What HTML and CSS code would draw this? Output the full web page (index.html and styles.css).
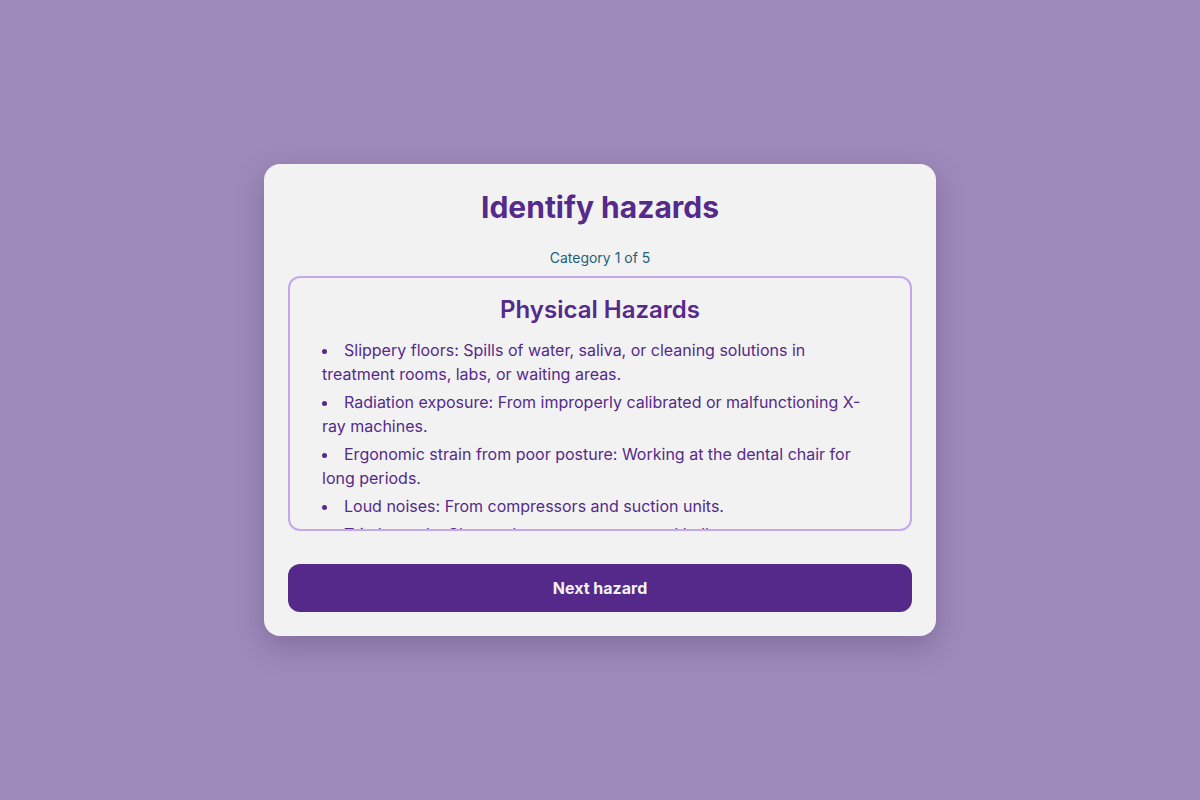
FILE: index.html
```html
<!DOCTYPE html>
<html lang="en">
<head>
<meta charset="utf-8">
<title>Identify hazards</title>
<link rel="stylesheet" href="styles.css">
</head>
<body>
<main class="card">
  <h1 class="title">Identify hazards</h1>
  <p class="progress">Category 1 of 5</p>
  <section class="hazard-box">
    <h2 class="hazard-title">Physical Hazards</h2>
    <ul class="hazard-list">
      <li>Slippery floors: Spills of water, saliva, or cleaning solutions in treatment rooms, labs, or waiting areas.</li>
      <li>Radiation exposure: From improperly calibrated or malfunctioning X-ray machines.</li>
      <li>Ergonomic strain from poor posture: Working at the dental chair for long periods.</li>
      <li>Loud noises: From compressors and suction units.</li>
      <li>Trip hazards: Cluttered treatment rooms and hallways.</li>
    </ul>
  </section>
  <button class="next-btn" type="button">Next hazard</button>
</main>
</body>
</html>
```

FILE: styles.css
```css
* { box-sizing: border-box; }

html, body {
  margin: 0;
  height: 100%;
}

body {
  background: #9e8bbb;
  font-family: Inter, "Noto Sans", sans-serif;
  display: flex;
  align-items: center;
  justify-content: center;
}

.card {
  width: 672px;
  background: #f2f2f2;
  border-radius: 16px;
  padding: 24px;
  box-shadow: 0 10px 30px rgba(40, 20, 70, 0.25);
  display: flex;
  flex-direction: column;
}

.title {
  margin: 0;
  font-weight: 700;
  font-size: 30px;
  line-height: 38px;
  color: #552a8a;
  text-align: center;
}

.progress {
  margin: 22px 0 8px;
  font-size: 14px;
  line-height: 20px;
  color: #1f5f74;
  text-align: center;
}

.hazard-box {
  height: 255px;
  overflow: hidden;
  border: 2px solid #c3a9ea;
  border-radius: 12px;
  padding: 16px 32px;
}

.hazard-title {
  margin: 0 0 12px;
  font-size: 24px;
  line-height: 32px;
  font-weight: 600;
  color: #552a8a;
  text-align: center;
}

.hazard-list {
  margin: 0;
  padding: 0;
  list-style-position: inside;
  color: #552a8a;
  font-size: 16px;
  line-height: 24px;
}

.hazard-list li {
  margin-bottom: 4px;
}

.next-btn {
  margin-top: 33px;
  height: 48px;
  border: none;
  border-radius: 12px;
  background: #54298a;
  color: #f2f2f2;
  font-family: Inter, "Noto Sans", sans-serif;
  font-size: 16px;
  font-weight: 700;
  cursor: pointer;
}
```
